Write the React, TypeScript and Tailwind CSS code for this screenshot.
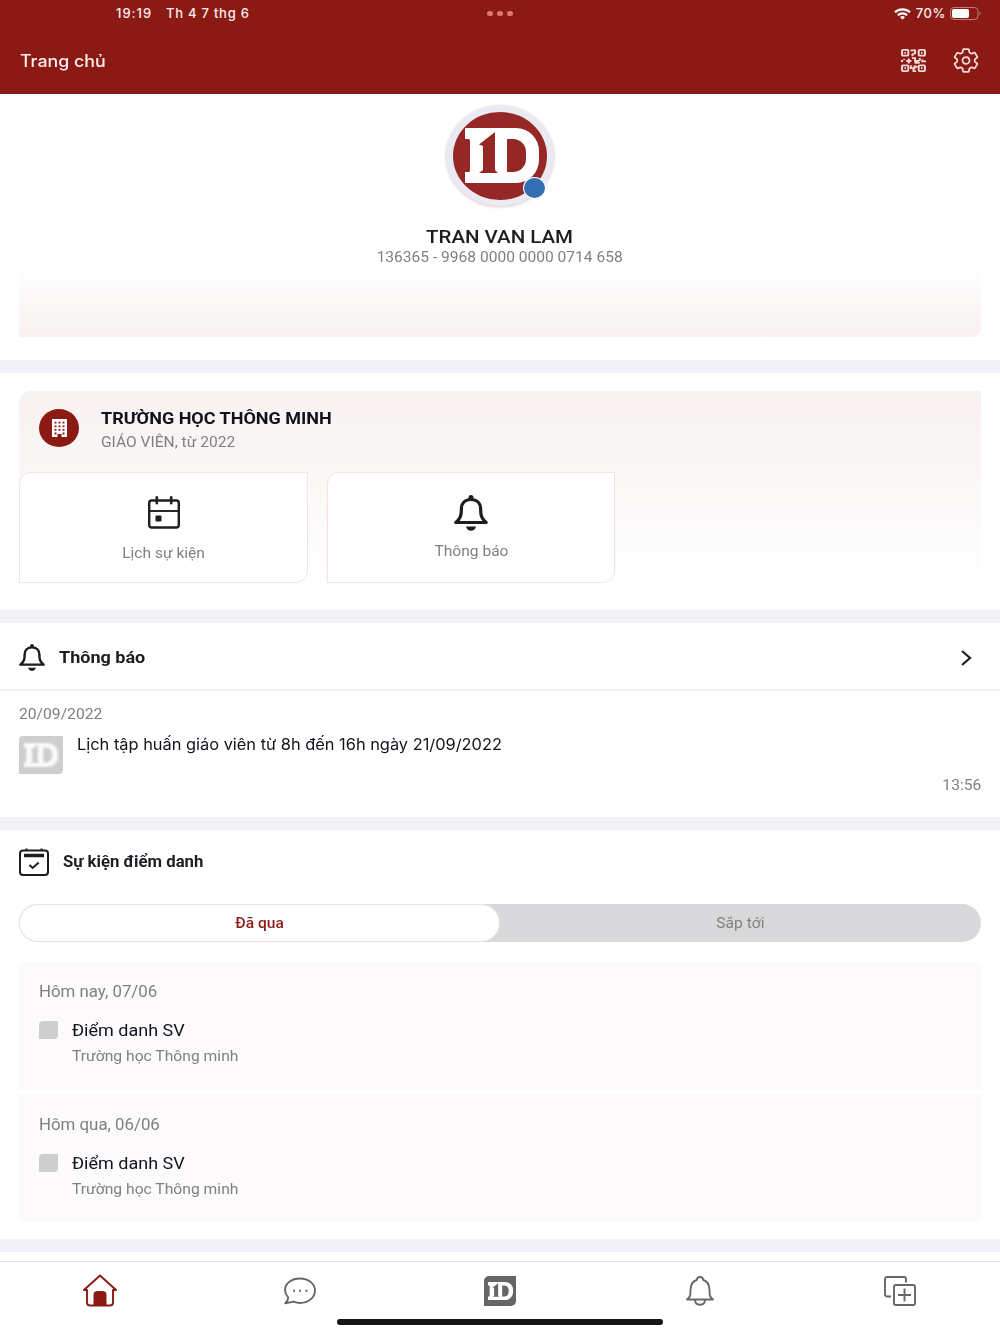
import { useState, type ReactNode } from "react";
import { IoSettingsOutline } from "react-icons/io5";

const days = [
  { date: "Hôm nay, 07/06", title: "Điểm danh SV", place: "Trường học Thông minh" },
  { date: "Hôm qua, 06/06", title: "Điểm danh SV", place: "Trường học Thông minh" },
];

const Divider = ({ className }: { className: string }) => (
  <div className={`shrink-0 bg-[#f2f1f7] ${className}`} />
);

// text is slightly wide across the whole app
const Txt = ({ className, children }: { className: string; children: ReactNode }) => (
  <span className={`inline-block whitespace-nowrap scale-x-[1.073] ${className}`}>{children}</span>
);

const LogoMark = ({ className, bg, fg }: { className: string; bg: string; fg: string }) => (
  <svg className={className} viewBox="0 0 74 55" preserveAspectRatio="none">
    <rect width="50" height="55" rx="1" fill={fg} />
    <rect x="20" width="54" height="55" rx="23" fill={fg} />
    <rect x="-2" y="11" width="7" height="33" rx="1.5" fill={bg} />
    <rect x="30" y="11" width="31" height="33" rx="13" fill={bg} />
    <rect x="29" y="10" width="13" height="35" fill={fg} />
    <path fill={bg} d="M30 4v38l3 3H14l4-3V18l-4-1.500z" />
  </svg>
);

const QrIcon = () => (
  <svg className="h-[23px] w-[25px]" viewBox="0 0 24 24" preserveAspectRatio="none" fill="none" stroke="#f2d9d7" strokeWidth="1.9">
    <rect x="1" y="1" width="6" height="6" rx="1" />
    <rect x="17" y="1" width="6" height="6" rx="1" />
    <rect x="1" y="17" width="6" height="6" rx="1" />
    <rect x="17" y="17" width="6" height="6" rx="1" />
    <path d="M3.2 4h1.6M19.2 4h1.6M3.2 20h1.6M19.2 20h1.6M9 1.500h4.500v3l-2.500 1v2M0 12.500h2M3 10.500v1M5 12.500h5M7.500 10v5M10.500 9.500h3v3h4M13 14.500h5M18 9.500v3M20.500 11v2H24M9.500 17v3h3.500v-3M12 20v3h2.500M15 17.500v2" />
  </svg>
);

const BellIcon = ({ className }: { className: string }) => (
  <svg className={className} viewBox="0 0 34 36" preserveAspectRatio="none">
    <path
      d="M17 4.500c-6 0-9.600 4-9.600 9.600 0 6.400-.8 9.400-5.600 13.400h30.400c-4.800-4-5.600-7-5.600-13.400C26.600 8.500 23 4.500 17 4.500z"
      fill="none"
      stroke="#1d1d22"
      strokeWidth="3.200"
      strokeLinejoin="round"
    />
    <path d="M14.500 4V2.500a2.500 2.500 0 0 1 5 0V4zM12 31.500h10c-.6 2.800-2.600 4.200-5 4.200s-4.400-1.400-5-4.200z" fill="#1d1d22" />
  </svg>
);

const CalendarIcon = () => (
  <svg className="h-[33px] w-[32px]" viewBox="0 0 32 33" fill="none" stroke="#1d1d22" strokeWidth="2.400">
    <rect x="1.200" y="4.500" width="29.600" height="27" rx="2.500" />
    <path d="M1 15h30" strokeWidth="1.900" />
    <path d="M8.800 1.300v6M23.200 1.300v6" strokeWidth="2.600" strokeLinecap="round" />
    <rect x="7.500" y="19.500" width="6" height="6" rx="1" fill="#1d1d22" stroke="none" />
  </svg>
);

const Header = () => (
  <header className="h-[94px] shrink-0 bg-[#8c1a14] text-[#fbeeed]">
    <div className="grid h-[27px] grid-cols-3 items-center font-[Inter] text-[13px] font-medium">
      <div className="flex gap-[13px] pl-[116px]">
        <span className="w-[37px] tracking-[1px]">19:19</span>
        <span className="whitespace-nowrap tracking-[0.75px]">Th 4 7 thg 6</span>
      </div>
      <div className="flex justify-center gap-1">
        <i className="h-[5px] w-1.5 rounded-full bg-[#e07672]" />
        <i className="h-[5px] w-1.5 rounded-full bg-[#e07672]" />
        <i className="h-[5px] w-1.5 rounded-full bg-[#e07672]" />
      </div>
      <div className="flex items-center justify-end pr-[18px]">
        <svg className="mr-[5px] h-3 w-[17px]" viewBox="0 0 17 12" fill="none" stroke="#fff" strokeWidth="2.200">
          <path d="M1 4.300a11 11 0 0 1 15 0M3.800 7.200a7 7 0 0 1 9.400 0" />
          <path d="M8.500 11.500 6 9.200a3.800 3.800 0 0 1 5 0z" fill="#fff" stroke="none" />
        </svg>
        <span className="tracking-[0.6px]">70%</span>
        <svg className="ml-1 h-[13px] w-8" viewBox="0 0 32 13">
          <rect x=".5" y=".5" width="27.500" height="12" rx="3.500" fill="none" stroke="#bd7d79" />
          <rect x="2" y="2" width="17" height="9" rx="2" fill="#fff" />
          <path d="M29.500 4.500c1.500.5 1.500 3.500 0 4z" fill="#bd7d79" />
        </svg>
      </div>
    </div>
    <div className="flex h-[67px] items-center justify-between px-5">
      <Txt className="origin-left pt-px font-[Inter] text-[16.600px] font-medium">Trang chủ</Txt>
      <div className="flex items-center gap-[26px]">
        <QrIcon />
        <IoSettingsOutline className="h-[27px] w-[28px] text-[#f3d9d7]" preserveAspectRatio="none" />
      </div>
    </div>
  </header>
);

const Profile = () => (
  <section className="flex h-[266px] shrink-0 flex-col items-center px-[19px] pt-[11px]">
    <div className="relative flex h-[101px] w-[108px] items-center justify-center rounded-[50%] bg-[#ebe9f2] shadow-[0_1px_3px_#d8c8ca]">
      <div className="flex h-[88px] w-[94px] items-center justify-center rounded-[50%] bg-[#952827]">
        <LogoMark className="ml-1 h-[55px] w-[74px]" bg="#952827" fg="#fff" />
      </div>
      <i className="absolute left-[77px] top-[72px] h-[22px] w-[23px] rounded-[50%] border border-white bg-[#336fb0]" />
    </div>
    <Txt className="mt-[19px] text-[19.100px] font-medium leading-6 text-[#1d1d22]">TRAN VAN LAM</Txt>
    <Txt className="mt-px text-[14.500px] leading-4 text-[#808080]">136365 - 9968 0000 0000 0714 658</Txt>
    <div className="mt-[-1px] h-[72px] w-full rounded-br-[9px] bg-linear-to-b from-white to-[#f8f1f1]" />
  </section>
);

const School = () => (
  <section className="h-[237px] shrink-0 px-[19px] pt-[18px]">
    <div className="h-[199px] rounded-tl-xl bg-linear-to-b from-[#f8f1f1] to-white">
      <div className="flex h-[81px] pl-5 pt-[18px]">
        <div className="flex h-[38px] w-10 items-center justify-center rounded-[50%] bg-[#8c1a14]">
          <svg className="h-[18px] w-[15px]" viewBox="0 0 15 18">
            <path fill="#fff" d="M0 0h15v18H9.500v-3h-4v3H0z" />
            <path
              d="M2.500 3.700h10M2.500 7.300h10M2.500 10.900h10M2.500 14.500h2M10.500 14.500h2"
              stroke="#8c1a14"
              strokeWidth="1.800"
              strokeDasharray="2 2"
            />
          </svg>
        </div>
        <div className="ml-[22px] flex flex-col items-start">
          <Txt className="origin-left text-[16.800px] font-bold leading-[19px] text-[#12121f]">TRƯỜNG HỌC THÔNG MINH</Txt>
          <Txt className="mt-[5px] origin-left text-[14.500px] leading-5 text-[#808080]">GIÁO VIÊN, từ 2022</Txt>
        </div>
      </div>
      <div className="flex gap-[19px]">
        <button className="flex h-[111px] w-[289px] flex-col items-center rounded-br-xl rounded-tl-xl border border-[#f4e3e4] bg-white pt-[23px]">
          <CalendarIcon />
          <Txt className="mt-[15px] text-[14.500px] leading-5 text-[#808080]">Lịch sự kiện</Txt>
        </button>
        <button className="flex h-[111px] w-[288px] flex-col items-center rounded-br-xl rounded-tl-xl border border-[#f4e3e4] bg-white pt-[22px]">
          <BellIcon className="h-9 w-[34px]" />
          <Txt className="mt-[11px] text-[14.500px] leading-5 text-[#808080]">Thông báo</Txt>
        </button>
      </div>
    </div>
  </section>
);

const Notices = () => (
  <section className="h-[194px] shrink-0">
    <div className="flex h-[68px] items-center border-b-2 border-[#f2f1f7] pl-[19px] pr-7 pt-[3px]">
      <BellIcon className="h-[27px] w-[26px]" />
      <Txt className="ml-3.5 origin-left text-[16.800px] font-bold text-[#1d1d22]">Thông báo</Txt>
      <svg className="ml-auto h-4 w-3" viewBox="0 0 12 16" fill="none" stroke="#1d1d22" strokeWidth="2.200">
        <path d="m2 1 8 7-8 7" />
      </svg>
    </div>
    <div className="flex flex-col items-start px-[19px] pt-[13px]">
      <Txt className="origin-left text-[14.600px] leading-5 text-[#808080]">20/09/2022</Txt>
      <div className="mt-[12px] flex">
        <div className="flex h-[38px] w-11 items-center justify-center rounded-br rounded-tl bg-[#cecece]">
          <LogoMark className="h-6 w-[34px] opacity-90 blur-[0.8px]" bg="#cecece" fg="#fff" />
        </div>
        <Txt className="ml-3.5 origin-left font-[Inter] text-[15.270px] leading-[18px] text-[#12121a]">
          Lịch tập huấn giáo viên từ 8h đến 16h ngày 21/09/2022
        </Txt>
      </div>
      <Txt className="mt-px origin-right self-end text-[14.600px] leading-5 text-[#808080]">13:56</Txt>
    </div>
  </section>
);

const Events = () => {
  const [past, setPast] = useState(true);

  return (
    <section className="h-[409px] shrink-0 px-[19px] pt-4">
      <div className="flex h-8 items-center">
        <svg className="h-7 w-[30px]" viewBox="0 0 30 28" fill="none" stroke="#1d1d22" strokeWidth="2">
          <rect x="1" y="2.500" width="28" height="24.500" rx="3" />
          <path d="M7.500 2V.5M22.500 2V.5" />
          <path d="M5 7.500h20" strokeWidth="3.500" />
          <path d="m10.500 17 3.200 3 6-5.500" />
        </svg>
        <Txt className="ml-3.5 origin-left pt-0.5 text-[15.600px] font-bold text-[#1d1d22]">Sự kiện điểm danh</Txt>
      </div>
      <div className="mt-[26px] flex h-[38px] rounded-full bg-[#d9d9db] text-[14.500px]">
        <button
          onClick={() => setPast(true)}
          className={`w-1/2 rounded-full pt-0.5 ${past ? "border border-[#f0dfe1] bg-white font-medium text-[#8c1a14]" : "text-[#808080]"}`}
        >
          <Txt className="">Đã qua</Txt>
        </button>
        <button
          onClick={() => setPast(false)}
          className={`w-1/2 rounded-full pt-0.5 ${past ? "text-[#808080]" : "border border-[#f0dfe1] bg-white font-medium text-[#8c1a14]"}`}
        >
          <Txt className="">Sắp tới</Txt>
        </button>
      </div>
      <div className="mt-5 flex flex-col gap-[6px]">
        {days.map((day) => (
          <div key={day.date} className="flex h-[127px] flex-col items-start bg-[#fcfafb] pl-5 pt-5">
            <Txt className="origin-left text-[15.700px] leading-5 text-[#808080]">{day.date}</Txt>
            <div className="mt-[17px] flex">
              <i className="mt-0.5 h-[18px] w-[19px] rounded-br rounded-tl bg-[#cecece]" />
              <div className="ml-3.5 flex flex-col items-start">
                <Txt className="origin-left text-[16.800px] leading-[22px] text-[#12121f]">{day.title}</Txt>
                <Txt className="mt-[5px] origin-left text-[14.600px] leading-5 text-[#808080]">{day.place}</Txt>
              </div>
            </div>
          </div>
        ))}
      </div>
    </section>
  );
};

const TabBar = () => (
  <nav className="flex flex-1 flex-col items-center border-t border-[#e2e2e4]">
    <div className="grid h-[57px] w-full grid-cols-5 place-items-center">
      <svg className="h-[33px] w-9" viewBox="0 0 36 33">
        <path
          d="M5 16H2L18 1.500 34 16h-3v13a3 3 0 0 1-3 2.500H8A3 3 0 0 1 5 29z"
          fill="none"
          stroke="#8c1a14"
          strokeWidth="1.900"
          strokeLinejoin="round"
        />
        <path d="M11.500 32V21a4 4 0 0 1 4-4h5a4 4 0 0 1 4 4v11z" fill="#8c1a14" />
      </svg>
      <svg className="h-7 w-8" viewBox="0 0 32 28" fill="none" stroke="#66666b" strokeWidth="1.900">
        <path d="M4.200 20.300A11.500 11.500 0 0 1 1 13C1 6.300 7.700 1.500 16 1.500S31 6.500 31 13.500 24.300 26 16 26c-2.300 0-4.400-.5-6.300-1.400L1.300 26.200c1.700-1.600 3-3.600 2.900-5.900z" strokeLinejoin="round" />
        <path d="M9 13.700h2M15 13.700h2M21.500 13.700h2" strokeWidth="2" />
      </svg>
      <div className="flex h-[30px] w-8 items-center justify-center rounded-br-[5px] rounded-tl-[5px] bg-[#666]">
        <LogoMark className="h-[18px] w-[25px]" bg="#666" fg="#fff" />
      </div>
      <svg className="h-[30px] w-7" viewBox="0 0 28 30" fill="none" stroke="#66666b" strokeWidth="1.900">
        <path d="M1 23.500h26c-3-2-3.500-4-3.500-9 0-6-1.500-9-6.200-10.500C17 2 15.800 1 14 1s-3 1-3.300 3C6 5.500 4.500 8.500 4.500 14.500c0 5-.5 7-3.500 9z" strokeLinejoin="round" />
        <path d="M9 23.500c0 3.500 2 5.300 5 5.300s5-1.800 5-5.300" />
      </svg>
      <svg className="h-[30px] w-8" viewBox="0 0 32 30" fill="none" stroke="#66666b" strokeWidth="1.900">
        <path d="M7 20.500H3a2 2 0 0 1-2-2V3a2 2 0 0 1 2-2h17a2 2 0 0 1 2 2v3.500" />
        <rect x="10" y="9" width="21" height="20" rx="1.800" />
        <path d="M14 19h13M20.500 12.500v13" />
      </svg>
    </div>
    <div className="h-[6px] w-[326px] rounded-full bg-[#161616]" />
  </nav>
);

const App = () => (
  <div className="flex h-[1334px] w-[1000px] flex-col overflow-hidden bg-white font-[Roboto,sans-serif]">
    <Header />
    <Profile />
    <Divider className="h-[13px]" />
    <School />
    <Divider className="h-[13px]" />
    <Notices />
    <Divider className="h-[13px]" />
    <Events />
    <Divider className="mb-[9px] h-[13px]" />
    <TabBar />
  </div>
);

export default App;
